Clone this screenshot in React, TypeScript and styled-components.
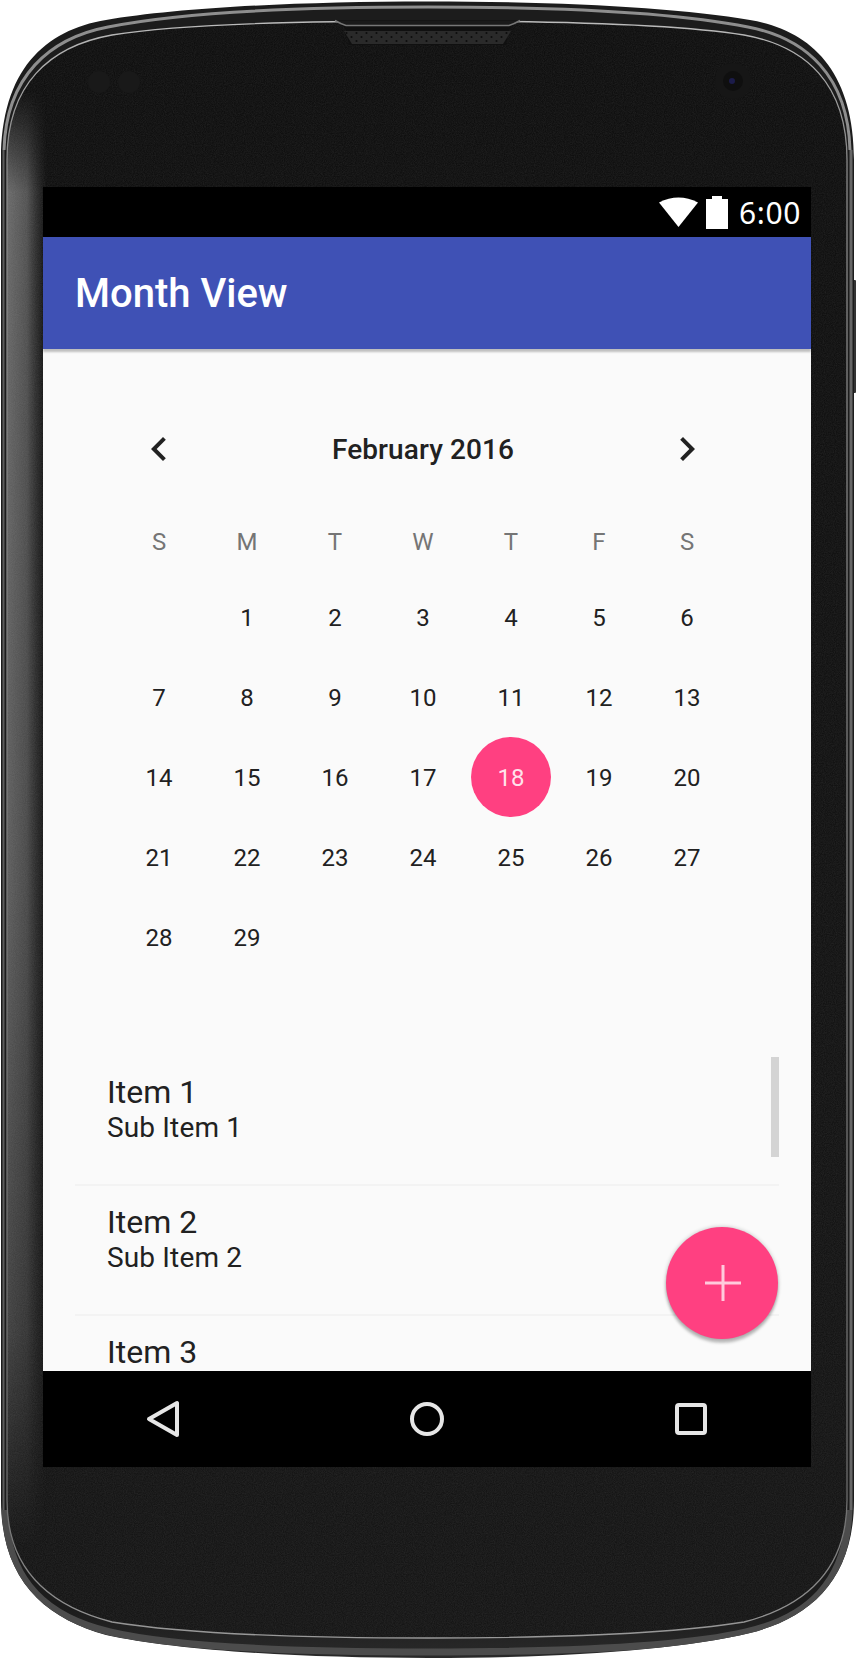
import React from "react";
import styled, { createGlobalStyle } from "styled-components";

const Global = createGlobalStyle`
  html, body { margin: 0; padding: 0; background: #fff; }
  body { font-family: Roboto, "Liberation Sans", sans-serif; }
`;

const Device = styled.div`
  position: relative;
  width: 856px;
  height: 1659px;
  box-sizing: border-box;
  padding: 187px 45px 192px 43px;
  overflow: hidden;
`;

const Frame = styled.svg`
  position: absolute;
  inset: 0;
  width: 856px;
  height: 1659px;
`;

const Screen = styled.main`
  position: relative;
  height: 1280px;
  display: flex;
  flex-direction: column;
  background: #fafafa;
`;

const StatusBar = styled.div`
  height: 50px;
  flex: none;
  background: #000;
  display: flex;
  align-items: center;
  justify-content: flex-end;
  padding-right: 10px;
  color: #fff;
`;

const WifiIcon = styled.svg`
  width: 39px;
  height: 30px;
  margin: 0 8px 0 0;
`;

const BatteryIcon = styled.svg`
  width: 22px;
  height: 33px;
  margin-right: 11px;
`;

const Clock = styled.span`
  font-family: "Noto Sans", "Open Sans", sans-serif;
  font-size: 30px;
  letter-spacing: 0.6px;
  line-height: 50px;
  padding-top: 2px;
`;

const AppBar = styled.header`
  position: relative;
  z-index: 1;
  flex: none;
  height: 112px;
  background: #3f51b5;
  display: flex;
  align-items: center;
  padding-left: 32px;
  box-shadow: 0 3px 2px rgba(0, 0, 0, 0.24);
`;

const Title = styled.h1`
  margin: 0;
  font-size: 40px;
  font-weight: 500;
  color: #fff;
`;

const Content = styled.div`
  position: relative;
  flex: 1;
  min-height: 0;
  overflow: hidden;
`;

const Calendar = styled.section`
  display: grid;
  grid-template-columns: repeat(7, 88px);
  margin: 60px 0 0 72px;
`;

const NavCell = styled.div`
  height: 80px;
  margin-bottom: 18px;
  display: flex;
  align-items: center;
  justify-content: center;
`;

const Chevron = styled.svg`
  width: 48px;
  height: 48px;
  fill: #212121;
`;

const MonthLabel = styled.div`
  grid-column: span 5;
  height: 80px;
  margin-bottom: 18px;
  display: flex;
  align-items: center;
  justify-content: center;
  font-size: 28px;
  font-weight: 500;
  letter-spacing: 0.08px;
  color: #212121;
`;

const Weekday = styled.div`
  height: 70px;
  display: flex;
  align-items: center;
  justify-content: center;
  font-size: 24px;
  color: #757575;
`;

const Day = styled.div<{ $selected?: boolean }>`
  box-sizing: border-box;
  width: 80px;
  height: 80px;
  margin: 0 4px;
  padding-top: 2px;
  display: flex;
  align-items: center;
  justify-content: center;
  border-radius: 50%;
  font-size: 24px;
  color: ${(p) => (p.$selected ? "rgba(255,255,255,0.87)" : "#212121")};
  background: ${(p) => (p.$selected ? "#ff4081" : "transparent")};
`;

const List = styled.section`
  position: relative;
  margin: 79px 32px 0;
`;

const Item = styled.article`
  height: 130px;
  box-sizing: border-box;
  padding: 18px 0 0 32px;
  border-bottom: 2px solid #f3f3f3;
  color: #212121;
`;

const ItemTitle = styled.div`
  font-size: 32px;
  line-height: 36px;
`;

const ItemSub = styled.div`
  font-size: 28px;
  letter-spacing: 0.15px;
  line-height: 36px;
`;

const ScrollThumb = styled.div`
  position: absolute;
  top: 1px;
  right: 0;
  width: 8px;
  height: 100px;
  background: #d4d4d4;
`;

const Fab = styled.button`
  position: absolute;
  right: 33px;
  bottom: 32px;
  width: 112px;
  height: 112px;
  padding: 0;
  border: 0;
  border-radius: 50%;
  background: #ff4081;
  display: flex;
  align-items: center;
  justify-content: center;
  box-shadow: 0 4px 3px rgba(0, 0, 0, 0.22), 0 0 4px rgba(0, 0, 0, 0.24);
`;

const PlusIcon = styled.svg`
  width: 36px;
  height: 36px;
  margin-left: 2px;
  stroke: rgba(255, 255, 255, 0.72);
  stroke-width: 3;
`;

const NavBar = styled.nav`
  flex: none;
  height: 96px;
  background: #000;
  display: flex;
  align-items: center;
  gap: 224px;
  padding-left: 100px;
`;

const NavIcon = styled.svg`
  width: 40px;
  height: 40px;
  fill: none;
  stroke: #e6e6e6;
  stroke-width: 4;
  stroke-linejoin: round;
`;

const outer =
  "M1 160 C1 70 45 30 106 20 C176 8 296 1.5 428 1.5 C560 1.5 680 8 750 20 C810 30 854 70 854 160 L854 1500 C854 1580 810 1618 750 1633 C680 1650 560 1658 428 1658 C296 1658 176 1650 106 1635 C45 1618 1 1580 1 1500 Z";
const rimLine =
  "M7 1500 C7 1570 50 1606 112 1622 C180 1633 300 1638 428 1638 C556 1638 676 1633 744 1622 C806 1606 847 1570 847 1500 L847 160 C847 84 806 46 744 35 C676 24 556 21 428 21 C300 21 180 24 112 35 C50 46 7 84 7 160 Z";
const topSheen =
  "M4 150 C6 76 50 38 108 27 C178 13 298 7 428 7 C558 7 678 13 748 27 C806 38 848 76 850 150";
const bottomSheen =
  "M5 1510 C7 1584 50 1618 110 1632 C178 1648 298 1652 428 1652 C558 1652 678 1648 746 1632 C806 1618 847 1584 849 1510";

const week = ["S", "M", "T", "W", "T", "F", "S"];
const days: (number | null)[] = [null, ...Array.from({ length: 29 }, (_, i) => i + 1)];
const items = [
  { title: "Item 1", sub: "Sub Item 1" },
  { title: "Item 2", sub: "Sub Item 2" },
  { title: "Item 3" },
];

function DeviceArt() {
  return (
    <Frame viewBox="0 0 856 1659" aria-hidden="true">
      <defs>
        <linearGradient id="sideGlow" x1="0" x2="1" y1="0" y2="0">
          <stop offset="0" stopColor="#6a6a6a" />
          <stop offset="0.5" stopColor="#525252" />
          <stop offset="1" stopColor="#404040" stopOpacity="0" />
        </linearGradient>
        <linearGradient id="sideFade" x1="0" x2="0" y1="0" y2="1">
          <stop offset="0" stopColor="#000" />
          <stop offset="0.07" stopColor="#fff" />
          <stop offset="0.55" stopColor="#ddd" />
          <stop offset="0.85" stopColor="#888" />
          <stop offset="1" stopColor="#000" />
        </linearGradient>
        <mask id="sideMask">
          <rect x="0" y="90" width="60" height="1460" fill="url(#sideFade)" />
        </mask>
        <linearGradient id="body" x1="0" x2="0" y1="0" y2="1">
          <stop offset="0" stopColor="#1c1c1c" />
          <stop offset="0.97" stopColor="#1c1c1c" />
          <stop offset="1" stopColor="#2a2a2a" />
        </linearGradient>
        <linearGradient id="face" x1="0" x2="0" y1="0" y2="1">
          <stop offset="0" stopColor="#0f0f0f" />
          <stop offset="1" stopColor="#161616" />
        </linearGradient>
        <linearGradient id="rimStroke" gradientUnits="userSpaceOnUse" x1="0" x2="0" y1="0" y2="1659">
          <stop offset="0" stopColor="#c4c4c4" />
          <stop offset="0.09" stopColor="#8a8a8a" />
          <stop offset="0.9" stopColor="#6c6c6c" />
          <stop offset="1" stopColor="#a0a0a0" />
        </linearGradient>
        <clipPath id="rimClip">
          <path d={rimLine} />
        </clipPath>
        <clipPath id="bodyClip">
          <path d={outer} />
        </clipPath>
        <filter id="grain" x="0" y="0" width="100%" height="100%">
          <feTurbulence type="fractalNoise" baseFrequency="0.9" numOctaves="2" seed="4" />
          <feColorMatrix values="0 0 0 0 1  0 0 0 0 1  0 0 0 0 1  0.1 0 0 0 -0.025" />
        </filter>
        <pattern id="grille" width="10" height="8" patternUnits="userSpaceOnUse" x="344" y="31">
          <circle cx="2.5" cy="2" r="1.1" fill="#0c0c0c" />
          <circle cx="7.5" cy="6" r="1.1" fill="#0c0c0c" />
        </pattern>
      </defs>

      <rect x="852" y="280" width="4" height="113" rx="1" fill="#333" />
      <path d={outer} fill="url(#body)" />
      <g clipPath="url(#bodyClip)" fill="none">
        <path d={topSheen} stroke="#8e8e8e" strokeWidth="3" />
        <path d={bottomSheen} stroke="#4c4c4c" strokeWidth="7" />
        <path d="M3.5 1510 V150" stroke="#5c5c5c" strokeWidth="2" />
        <path d="M851 1510 V150" stroke="#666" strokeWidth="3" />
      </g>
      <path d={rimLine} fill="url(#face)" />
      <g clipPath="url(#rimClip)">
        <rect x="7" y="90" width="40" height="1460" fill="url(#sideGlow)" mask="url(#sideMask)" />
        <rect x="0" y="0" width="856" height="1659" filter="url(#grain)" />
      </g>
      <path d={rimLine} fill="none" stroke="url(#rimStroke)" strokeWidth="1.3" />

      <path d="M333 20 Q340 20 346 30 L349 45 H506 L509 30 Q515 20 522 20 Z" fill="#101010" />
      <path d="M335 20.5 Q341 24 346 25.5 H509 Q514 24 520 20.5" fill="#1a1a1a" stroke="#777" strokeWidth="1.5" />
      <path d="M344 31 H511 L503 44 H352 Z" fill="#2a2a2a" />
      <path d="M344 31 H511 L503 44 H352 Z" fill="url(#grille)" />

      <circle cx="99" cy="82" r="11" fill="#191919" />
      <circle cx="129" cy="82" r="11" fill="#191919" />
      <circle cx="733" cy="81" r="18" fill="#161616" />
      <circle cx="733" cy="81" r="10" fill="#0f0f0f" />
      <circle cx="732" cy="81" r="3" fill="#1c1c4a" />
    </Frame>
  );
}

export default function App() {
  return (
    <>
      <Global />
      <Device>
        <DeviceArt />
        <Screen>
          <StatusBar>
            <WifiIcon viewBox="0 0 39 30">
              <path d="M0 5.5 Q19.5 -4.5 39 5.5 L19.5 30 Z" fill="#fff" />
            </WifiIcon>
            <BatteryIcon viewBox="0 0 22 33">
              <path d="M6 0 H16 V3 H22 V33 H0 V3 H6 Z" fill="#fff" />
            </BatteryIcon>
            <Clock>6:00</Clock>
          </StatusBar>
          <AppBar>
            <Title>Month View</Title>
          </AppBar>
          <Content>
            <Calendar>
              <NavCell>
                <Chevron viewBox="0 0 24 24">
                  <path d="M15.41 7.41L14 6l-6 6 6 6 1.41-1.41L10.83 12z" />
                </Chevron>
              </NavCell>
              <MonthLabel>February 2016</MonthLabel>
              <NavCell>
                <Chevron viewBox="0 0 24 24">
                  <path d="M10 6L8.59 7.41 13.17 12l-4.58 4.59L10 18l6-6z" />
                </Chevron>
              </NavCell>
              {week.map((d, i) => (
                <Weekday key={i}>{d}</Weekday>
              ))}
              {days.map((d, i) => (
                <Day key={i} $selected={d === 18}>
                  {d}
                </Day>
              ))}
            </Calendar>
            <List>
              {items.map((item) => (
                <Item key={item.title}>
                  <ItemTitle>{item.title}</ItemTitle>
                  {item.sub && <ItemSub>{item.sub}</ItemSub>}
                </Item>
              ))}
              <ScrollThumb />
            </List>
            <Fab aria-label="Add">
              <PlusIcon viewBox="0 0 36 36">
                <path d="M18 0 V36 M0 18 H36" />
              </PlusIcon>
            </Fab>
          </Content>
          <NavBar>
            <NavIcon viewBox="0 0 40 40">
              <path d="M34 4 V36 L6 20 Z" />
            </NavIcon>
            <NavIcon viewBox="0 0 40 40">
              <circle cx="20" cy="20" r="15" />
            </NavIcon>
            <NavIcon viewBox="0 0 40 40">
              <rect x="6" y="6" width="28" height="28" rx="2" />
            </NavIcon>
          </NavBar>
        </Screen>
      </Device>
    </>
  );
}
